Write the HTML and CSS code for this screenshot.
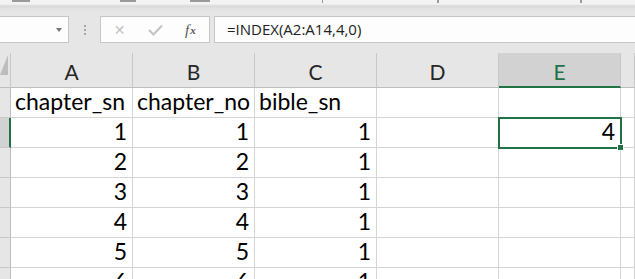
FILE: index.html
```html
<!DOCTYPE html>
<html lang="ko">
<head>
    <meta charset="UTF-8">
    <meta name="viewport" content="width=device-width, initial-scale=1.0">
    <title>sheet</title>
    <link rel="stylesheet" href="styles.css">
</head>
<body>
    <div class="ribbon-tail">
        <span class="group-mark mark-1"></span>
        <span class="group-mark mark-2"></span>
        <span class="group-mark mark-3"></span>
        <span class="group-mark mark-4"></span>
        <span class="group-mark mark-5"></span>
        <span class="group-mark mark-6"></span>
    </div>

    <div class="formula-bar">
        <div class="name-box">
            <span class="drop-arrow"></span>
        </div>
        <div class="grip">
            <span></span><span></span><span></span>
        </div>
        <div class="func-box">
            <span class="func-btn cancel">&#x2715;</span>
            <span class="func-btn enter">
                <svg width="15" height="12" viewBox="0 0 15 12"><path d="M1 6 L5.5 10.5 L14 1.5" fill="none" stroke="#c3c3c3" stroke-width="2"/></svg>
            </span>
            <span class="func-btn fx"><i>f</i><small>x</small></span>
        </div>
        <div class="formula-input">=INDEX(A2:A14,4,0)</div>
    </div>

    <div class="sheet">
        <div class="corner"><span class="corner-tri"></span></div>
        <div class="col-head">A</div>
        <div class="col-head">B</div>
        <div class="col-head">C</div>
        <div class="col-head">D</div>
        <div class="col-head selected">E</div>
        <div class="col-head"></div>

        <div class="row-head"></div>
        <div class="cell">chapter_sn</div>
        <div class="cell">chapter_no</div>
        <div class="cell">bible_sn</div>
        <div class="cell"></div>
        <div class="cell"></div>
        <div class="cell"></div>

        <div class="row-head selected"></div>
        <div class="cell num">1</div>
        <div class="cell num">1</div>
        <div class="cell num">1</div>
        <div class="cell"></div>
        <div class="cell num active">4<span class="fill-handle"></span></div>
        <div class="cell"></div>

        <div class="row-head"></div>
        <div class="cell num">2</div>
        <div class="cell num">2</div>
        <div class="cell num">1</div>
        <div class="cell"></div>
        <div class="cell"></div>
        <div class="cell"></div>

        <div class="row-head"></div>
        <div class="cell num">3</div>
        <div class="cell num">3</div>
        <div class="cell num">1</div>
        <div class="cell"></div>
        <div class="cell"></div>
        <div class="cell"></div>

        <div class="row-head"></div>
        <div class="cell num">4</div>
        <div class="cell num">4</div>
        <div class="cell num">1</div>
        <div class="cell"></div>
        <div class="cell"></div>
        <div class="cell"></div>

        <div class="row-head"></div>
        <div class="cell num">5</div>
        <div class="cell num">5</div>
        <div class="cell num">1</div>
        <div class="cell"></div>
        <div class="cell"></div>
        <div class="cell"></div>

        <div class="row-head"></div>
        <div class="cell num">6</div>
        <div class="cell num">6</div>
        <div class="cell num">1</div>
        <div class="cell"></div>
        <div class="cell"></div>
        <div class="cell"></div>
    </div>
</body>
</html>
```

FILE: styles.css
```css
html, body {
    margin: 0;
    padding: 0;
    width: 635px;
    height: 279px;
    overflow: hidden;
    background-color: #e6e6e6;
    font-family: Lato, "Liberation Sans", sans-serif;
}

.ribbon-tail {
    position: relative;
    height: 12px;
    overflow: hidden;
    background: linear-gradient(#f3f3f3 0, #f3f3f3 4px, #d9d9d9 6px, #e3e3e3 9px, #e6e6e6 12px);
}
.group-mark {
    position: absolute;
    top: 0;
    height: 2px;
    background-color: #9a9a9a;
}
/* bottoms of the ribbon group captions, cut off by the window edge */
.mark-1 { left: 12px; width: 18px; }
.mark-2 { left: 120px; width: 16px; }
.mark-3 { left: 190px; width: 20px; }
.mark-4 { left: 322px; width: 1px; height: 3px; }
.mark-5 { left: 437px; width: 2px; height: 3px; }
.mark-6 { left: 580px; width: 2px; height: 3px; }

.formula-bar {
    display: flex;
    align-items: center;
    height: 27px;
    margin-top: 4px;
}
.name-box {
    position: relative;
    box-sizing: border-box;
    width: 70px;
    height: 27px;
    margin-left: -1px;
    background-color: #fdfdfd;
    border: 1px solid #c6c6c6;
}
.drop-arrow {
    position: absolute;
    left: 56px;
    top: 11px;
    border-left: 3px solid transparent;
    border-right: 3px solid transparent;
    border-top: 4px solid #777;
}
.grip {
    display: flex;
    flex-direction: column;
    gap: 2px;
    width: 31px;
    align-items: center;
}
.grip span {
    width: 2px;
    height: 2px;
    background-color: #a6a6a6;
}
.func-box {
    box-sizing: border-box;
    display: flex;
    align-items: center;
    width: 110px;
    height: 27px;
    background-color: #fdfdfd;
    border: 1px solid #c6c6c6;
}
.func-btn {
    display: flex;
    justify-content: center;
    align-items: center;
}
.cancel {
    width: 38px;
    color: #c3c3c3;
    font-family: "DejaVu Sans", sans-serif;
    font-size: 14px;
}
.enter {
    width: 34px;
}
.fx {
    width: 38px;
    padding-top: 1px;
    color: #555;
    font-family: "Liberation Serif", serif;
    font-size: 15px;
}
.fx i {
    font-style: italic;
}
.fx small {
    font-size: 11px;
    font-style: italic;
    font-weight: bold;
    margin-left: 1px;
}
.formula-input {
    box-sizing: border-box;
    flex: 1;
    height: 27px;
    margin-left: 4px;
    padding-left: 12px;
    background-color: #fdfdfd;
    border: 1px solid #c6c6c6;
    border-right: none;
    font-family: "Open Sans", sans-serif;
    font-size: 15px;
    line-height: 24px;
    color: #222;
}

.sheet {
    display: grid;
    grid-template-columns: 11px repeat(5, 122px) 1fr;
    grid-auto-rows: 30px;
    grid-template-rows: 35px;
    margin-top: 10px;
}
.corner {
    position: relative;
    box-sizing: border-box;
    border-right: 1px solid #c8c8c8;
    border-bottom: 1px solid #bdbdbd;
}
.corner-tri {
    position: absolute;
    left: 0;
    bottom: 12px;
    border-right: 8px solid #bdbdbd;
    border-top: 20px solid transparent;
}
.col-head {
    box-sizing: border-box;
    display: flex;
    justify-content: center;
    align-items: center;
    padding-top: 2px;
    border-right: 1px solid #c8c8c8;
    border-bottom: 1px solid #bdbdbd;
    font-size: 21px;
    color: #262626;
}
.col-head.selected {
    background-color: #d2d2d2;
    color: #217346;
    border-bottom: 2px solid #217346;
    padding-top: 3px;
}
.row-head {
    box-sizing: border-box;
    border-right: 1px solid #bdbdbd;
    border-bottom: 1px solid #c8c8c8;
}
.row-head.selected {
    border-right: 2px solid #217346;
    background-color: #d2d2d2;
}
.cell {
    box-sizing: border-box;
    display: flex;
    align-items: flex-end;
    padding: 0 5px 3px 4px;
    background-color: #fff;
    border-right: 1px solid #d4d4d4;
    border-bottom: 1px solid #d4d4d4;
    font-size: 23px;
    line-height: 26px;
    color: #000;
    white-space: nowrap;
}
.cell.num {
    justify-content: flex-end;
}
.cell.active {
    position: relative;
    outline: 2px solid #217346;
    outline-offset: -1px;
    z-index: 1;
}
.fill-handle {
    position: absolute;
    right: -4px;
    bottom: -4px;
    width: 5px;
    height: 5px;
    background-color: #217346;
    border: 1px solid #fff;
}
```
